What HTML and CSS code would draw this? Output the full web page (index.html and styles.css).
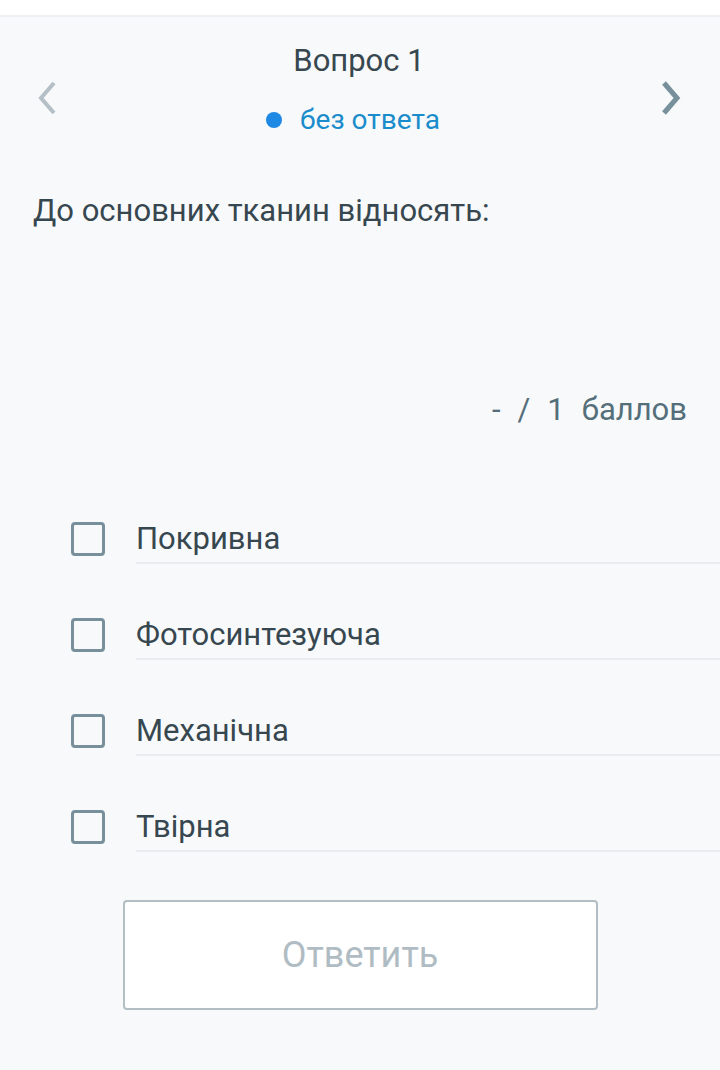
FILE: index.html
```html
<!DOCTYPE html>
<html lang="ru">
<head>
<meta charset="utf-8">
<link rel="stylesheet" href="styles.css">
</head>
<body>
<div class="topbar"></div>
<header class="qhead">
  <button class="nav prev" aria-label="prev">
    <svg width="24" height="36" viewBox="0 0 24 36"><path d="M19 3 L6 18 L19 33" fill="none" stroke="#b4bfc6" stroke-width="4"/></svg>
  </button>
  <div class="qtitle">
    <div class="qnum">Вопрос 1</div>
    <div class="qstatus"><span class="dot"></span>без ответа</div>
  </div>
  <button class="nav next" aria-label="next">
    <svg width="24" height="36" viewBox="0 0 24 36"><path d="M5 3 L18 18 L5 33" fill="none" stroke="#78909c" stroke-width="5"/></svg>
  </button>
</header>
<main class="content">
  <p class="question">До основних тканин відносять:</p>
  <div class="score"><span>-</span><span>/</span><span>1</span><span>баллов</span></div>
  <ul class="options">
    <li class="option"><span class="box"></span><span class="label">Покривна</span></li>
    <li class="option"><span class="box"></span><span class="label">Фотосинтезуюча</span></li>
    <li class="option"><span class="box"></span><span class="label">Механічна</span></li>
    <li class="option"><span class="box"></span><span class="label">Твірна</span></li>
  </ul>
  <div class="actions"><button class="answer">Ответить</button></div>
</main>
</body>
</html>
```
FILE: styles.css
```css
* { box-sizing: border-box; }
html, body { margin: 0; padding: 0; }
body {
  background: #f7f9fb;
  font-family: Roboto, "Noto Sans", sans-serif;
  width: 720px;
  height: 1070px;
  overflow: hidden;
}
.topbar {
  height: 17px;
  background: #ffffff;
  border-bottom: 2px solid #edf0f2;
}
.qhead {
  display: flex;
  align-items: center;
  justify-content: space-between;
  padding: 26px 36px 0 34px;
}
.nav {
  background: none;
  border: 0;
  padding: 0;
  width: 26px;
  height: 36px;
  display: flex;
  align-items: center;
  justify-content: center;
  margin-top: 18px;
}
.qtitle {
  display: flex;
  flex-direction: column;
  align-items: center;
}
.qnum {
  font-size: 31px;
  line-height: 36px;
  color: #37474f;
}
.qstatus {
  margin-top: 26px;
  padding-right: 12px;
  font-size: 28px;
  line-height: 30px;
  color: #1a8ccc;
  display: flex;
  align-items: center;
  gap: 18px;
}
.dot {
  width: 16px;
  height: 16px;
  border-radius: 50%;
  background: #1e88e5;
}
.question {
  margin: 58px 0 0 33px;
  font-size: 31px;
  line-height: 36px;
  color: #37474f;
}
.score {
  margin: 163px 33px 0 0;
  display: flex;
  justify-content: flex-end;
  gap: 17px;
  font-size: 31px;
  line-height: 36px;
  color: #546e7a;
}
.options {
  list-style: none;
  margin: 87px 0 0 0;
  padding: 0;
  display: flex;
  flex-direction: column;
  gap: 47px;
}
.option {
  display: flex;
  align-items: center;
  height: 49px;
  padding-left: 71px;
}
.box {
  width: 34px;
  height: 34px;
  border: 3.5px solid #78909c;
  border-radius: 4px;
  flex: none;
  margin-right: 31px;
  margin-bottom: 2px;
}
.label {
  flex: 1;
  align-self: stretch;
  display: flex;
  align-items: center;
  font-size: 31px;
  color: #37474f;
  border-bottom: 2px solid #e9edf0;
}
.actions {
  display: flex;
  justify-content: center;
  margin-top: 48px;
}
.answer {
  width: 475px;
  height: 110px;
  background: #ffffff;
  border: 2px solid #b3bec4;
  border-radius: 4px;
  font-family: Roboto, "Noto Sans", sans-serif;
  font-size: 36px;
  color: #b0bcc3;
}
```
